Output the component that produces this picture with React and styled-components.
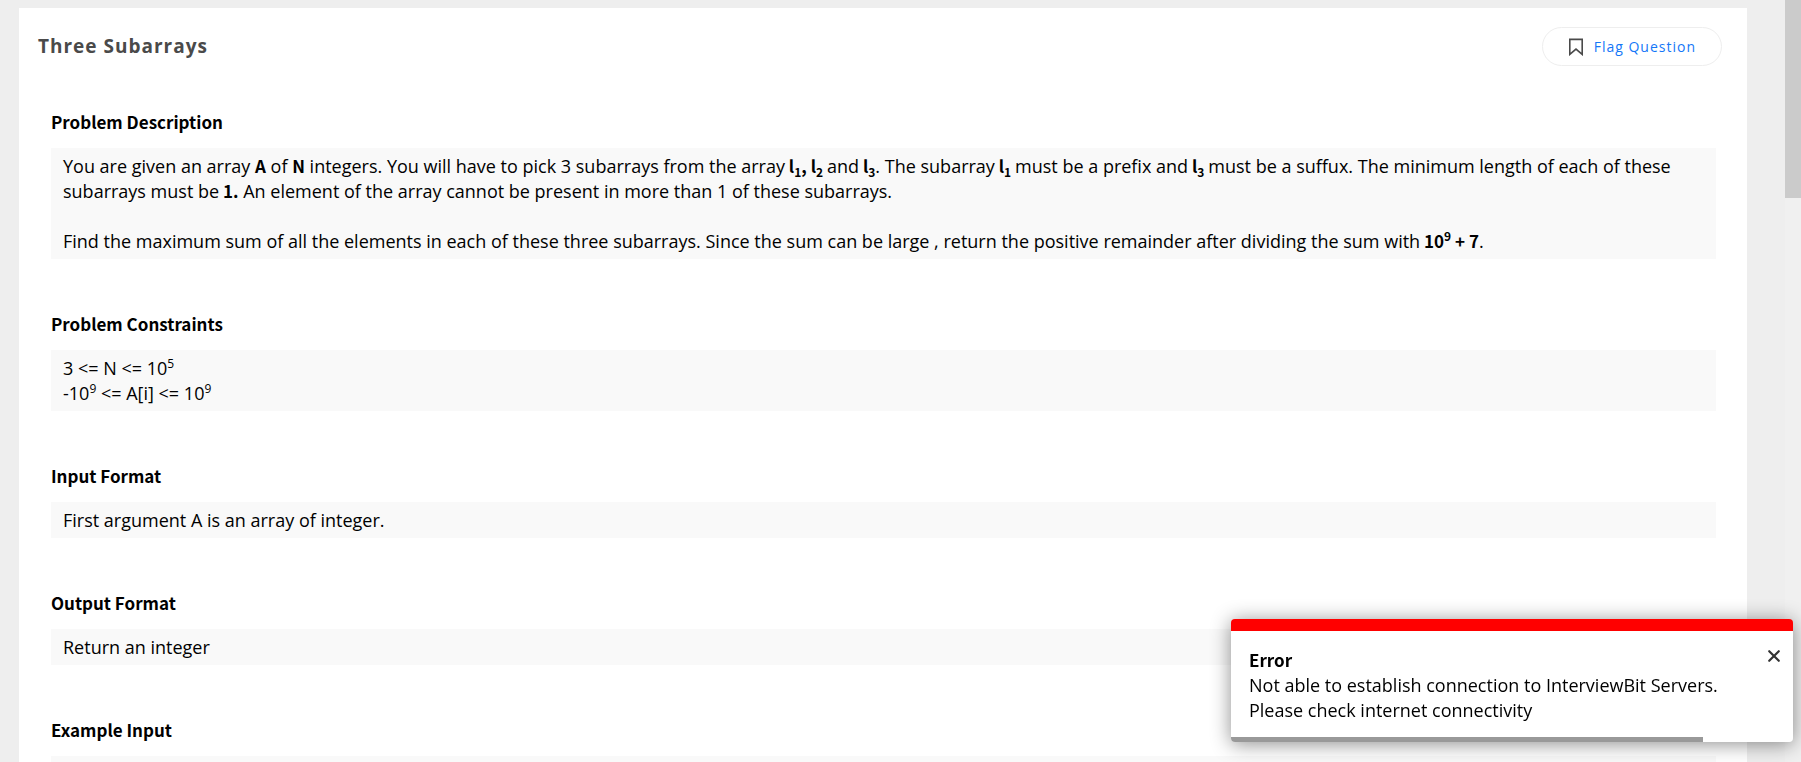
import React, { useState } from 'react';
import styled, { createGlobalStyle } from 'styled-components';

const GlobalStyle = createGlobalStyle`
  *, *::before, *::after { box-sizing: border-box; }
  body {
    margin: 0;
    background: #eeeeee;
    color: #000;
    font-family: "Open Sans", "Noto Sans", sans-serif;
    font-size: 18px;
    line-height: 25px;
  }
`;

const Page = styled.div`
  display: flex;
  height: 100vh;
  overflow: hidden;
`;

const Main = styled.main`
  flex: 1;
  min-width: 0;
  padding: 8px 38px 0 19px;
`;

const Card = styled.article`
  min-height: 100%;
  background: #fff;
`;

const CardHeader = styled.header`
  display: flex;
  align-items: center;
  justify-content: space-between;
  padding: 19px 25px 0 19px;
`;

const Title = styled.h1`
  margin: 0;
  color: #4a4a4a;
  font-size: 19px;
  font-weight: 700;
  letter-spacing: 1px;
`;

const FlagButton = styled.button`
  display: flex;
  align-items: center;
  gap: 10px;
  height: 39px;
  padding: 0 25px;
  border: 1px solid #eeeeee;
  border-radius: 20px;
  background: #fff;
  color: #1477f8;
  font: inherit;
  font-size: 14px;
  letter-spacing: 1px;
  cursor: pointer;
`;

const Sections = styled.div`
  display: flex;
  flex-direction: column;
  gap: 52px;
  padding: 43px 31px 52px 32px;
`;

const Heading = styled.h2`
  margin: 0 0 14px;
  font-family: "Noto Sans CJK SC", sans-serif;
  font-size: 17px;
  line-height: 25px;
  font-weight: 700;
`;

const Box = styled.div`
  min-height: 36px;
  padding: 6px 12px 5px;
  background: #f9f9f9;
`;

const Text = styled.p`
  margin: 0;

  & + & { margin-top: 25px; }

  sub, sup {
    font-size: 12px;
    line-height: 12px;
  }
`;

const Strong = styled.strong`
  font-family: "Noto Sans CJK SC", sans-serif;
  font-size: 17px;
  line-height: 17px;
  font-weight: 700;
`;

const ScrollTrack = styled.div`
  width: 16px;
  background: #f0f0f0;
`;

const ScrollThumb = styled.div`
  height: 26%;
  background: #cbcbcb;
`;

const Toast = styled.div`
  position: fixed;
  right: 8px;
  bottom: 20px;
  width: 562px;
  max-width: calc(100vw - 16px);
  overflow: hidden;
  border-top: 12px solid #ff0000;
  border-radius: 4px;
  background: #fff;
  box-shadow: 0 2px 20px rgba(0, 0, 0, 0.45);
`;

const ToastBody = styled.div`
  display: flex;
  align-items: flex-start;
  justify-content: space-between;
  padding: 17px 11px 14px 18px;
`;

const CloseButton = styled.button`
  display: flex;
  padding: 0;
  border: 0;
  background: none;
  cursor: pointer;
`;

const Progress = styled.div`
  height: 5px;
  background: linear-gradient(#999, #999) left / 84% 100% no-repeat;
`;

function Section({ title, children }) {
  return (
    <section>
      <Heading>{title}</Heading>
      <Box>{children}</Box>
    </section>
  );
}

export default function App() {
  const [toastOpen, setToastOpen] = useState(true);

  return (
    <>
      <GlobalStyle />
      <Page>
        <Main>
          <Card>
            <CardHeader>
              <Title>Three Subarrays</Title>
              <FlagButton type="button">
                <svg width="16" height="18" viewBox="0 0 16 18" fill="none" stroke="#4a4a4a" strokeWidth="1.6" aria-hidden="true">
                  <path d="M1.8 1.4h12.4v15L8 11.1l-6.2 5.3z" />
                </svg>
                Flag Question
              </FlagButton>
            </CardHeader>
            <Sections>
              <Section title="Problem Description">
                <Text>
                  You are given an array <Strong>A</Strong> of <Strong>N</Strong> integers. You will have to pick 3
                  subarrays from the array<Strong> l<sub>1</sub>, l<sub>2</sub> </Strong>and
                  <Strong> l<sub>3</sub></Strong>. The subarray<Strong> l<sub>1</sub> </Strong>must be a prefix and
                  <Strong> l<sub>3</sub> </Strong>must be a suffux. The minimum length of each of these subarrays must
                  be<Strong> 1.</Strong> An element of the array cannot be present in more than 1 of these subarrays.
                </Text>
                <Text>
                  Find the maximum sum of all the elements in each of these three subarrays. Since the sum can be
                  large , return the positive remainder after dividing the sum with
                  <Strong> 10<sup>9</sup> + 7</Strong>.
                </Text>
              </Section>
              <Section title="Problem Constraints">
                <Text>
                  3 &lt;= N &lt;= 10<sup>5</sup>
                  <br />
                  -10<sup>9</sup> &lt;= A[i] &lt;= 10<sup>9</sup>
                </Text>
              </Section>
              <Section title="Input Format">
                <Text>First argument A is an array of integer.</Text>
              </Section>
              <Section title="Output Format">
                <Text>Return an integer</Text>
              </Section>
              <Section title="Example Input" />
            </Sections>
          </Card>
        </Main>
        <ScrollTrack>
          <ScrollThumb />
        </ScrollTrack>
      </Page>
      {toastOpen && (
        <Toast role="alert">
          <ToastBody>
            <Text>
              <Strong>Error</Strong>
              <br />
              Not able to establish connection to InterviewBit Servers.
              <br />
              Please check internet connectivity
            </Text>
            <CloseButton type="button" aria-label="Close" onClick={() => setToastOpen(false)}>
              <svg width="16" height="16" viewBox="0 0 16 16" fill="none" stroke="#333" strokeWidth="2.2" strokeLinecap="round">
                <path d="M3.2 3.2l9.6 9.6M12.8 3.2l-9.6 9.6" />
              </svg>
            </CloseButton>
          </ToastBody>
          <Progress />
        </Toast>
      )}
    </>
  );
}
